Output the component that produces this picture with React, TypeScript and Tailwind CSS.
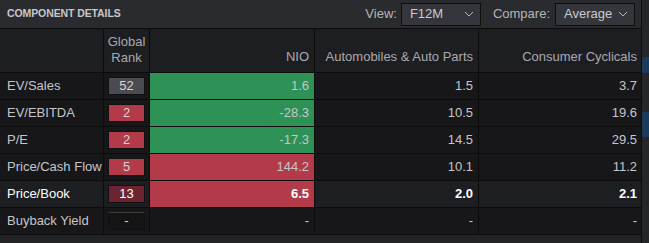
import React from 'react';

type Row = {
  label: string;
  rank: string;
  rankTone: 'gray' | 'red' | 'darkred' | 'none';
  nio: string;
  nioTone: 'green' | 'red' | 'none';
  auto: string;
  cyc: string;
  active?: boolean;
};

const rows: Row[] = [
  { label: 'EV/Sales', rank: '52', rankTone: 'gray', nio: '1.6', nioTone: 'green', auto: '1.5', cyc: '3.7' },
  { label: 'EV/EBITDA', rank: '2', rankTone: 'red', nio: '-28.3', nioTone: 'green', auto: '10.5', cyc: '19.6' },
  { label: 'P/E', rank: '2', rankTone: 'red', nio: '-17.3', nioTone: 'green', auto: '14.5', cyc: '29.5' },
  { label: 'Price/Cash Flow', rank: '5', rankTone: 'red', nio: '144.2', nioTone: 'red', auto: '10.1', cyc: '11.2' },
  { label: 'Price/Book', rank: '13', rankTone: 'darkred', nio: '6.5', nioTone: 'red', auto: '2.0', cyc: '2.1', active: true },
  { label: 'Buyback Yield', rank: '-', rankTone: 'none', nio: '-', nioTone: 'none', auto: '-', cyc: '-' },
];

const badgeClass = {
  gray: 'bg-[#4a4b51] border-[#111113]',
  red: 'bg-[#b33a48] border-[#111113]',
  darkred: 'bg-[#6c2430] border-[#111113]',
  none: 'bg-[#141415] border-[#111113] border-t-[#3a3b3e]',
};

const nioClass = {
  green: 'bg-[#2e9156]',
  red: 'bg-[#b33a48]',
  none: '',
};

function Chevron() {
  return (
    <svg width="10" height="6" viewBox="0 0 10 6" className="text-[#b4b5b9]">
      <polyline points="1,1 5,5 9,1" fill="none" stroke="currentColor" strokeWidth="1" />
    </svg>
  );
}

function Select({ value }: { value: string }) {
  return (
    <div className="flex h-[23px] w-[80px] items-center justify-between border border-[#0e0e0f] bg-[#35363b] pl-[8px] pr-[6px] text-[13px] text-[#c9cace]">
      <span>{value}</span>
      <Chevron />
    </div>
  );
}

export default function App() {
  return (
    <div
      className="flex h-[243px] w-[649px] overflow-hidden bg-[#222326] text-[13px]"
      style={{ fontFamily: '"Liberation Sans", Arial, sans-serif' }}
    >
      <div className="flex w-[642px] flex-col border-r border-[#0c0c0d]">
        {/* title bar */}
        <div className="flex h-[29px] items-center justify-between border-b border-[#0c0c0d] bg-[#2a2b2f] pl-[7px] pr-[6px]">
          <span className="text-[10.5px] font-bold tracking-[-0.1px] text-[#c6c7cb]">COMPONENT DETAILS</span>
          <div className="flex items-center">
            <span className="mr-[4px] text-[#b4b5b9]">View:</span>
            <Select value="F12M" />
            <span className="ml-[12px] mr-[5px] text-[#b4b5b9]">Compare:</span>
            <Select value="Average" />
          </div>
        </div>

        {/* header row */}
        <div className="flex h-[44px] border-b border-[#0c0c0d] bg-[#1d1e21] text-[#a9aaaf]">
          <div className="w-[104px] border-r border-[#0c0c0d]" />
          <div className="flex w-[46px] items-end justify-center border-r border-[#0c0c0d] pb-[6px] text-center leading-[16px]">
            Global
            <br />
            Rank
          </div>
          <div className="flex w-[165px] items-end justify-end border-r border-[#0c0c0d] pb-[6px] pr-[5px]">NIO</div>
          <div className="flex w-[164px] items-end justify-end border-r border-[#0c0c0d] pb-[6px] pr-[5px]">
            Automobiles &amp; Auto Parts
          </div>
          <div className="flex w-[162px] items-end justify-end pb-[6px] pr-[4px]">Consumer Cyclicals</div>
        </div>

        {rows.map((r) => {
          const text = r.active ? 'text-white' : 'text-[#c5c6ca]';
          const weight = r.active ? 'font-semibold' : '';
          return (
            <div
              key={r.label}
              className={`flex h-[27px] border-b border-[#0c0c0d] ${r.active ? 'bg-[#1d1e21]' : 'bg-[#171719]'} ${text}`}
            >
              <div className="flex w-[104px] items-center border-r border-[#0c0c0d] pl-[7px]">{r.label}</div>
              <div className="flex w-[46px] items-center justify-center border-r border-[#0c0c0d]">
                <div
                  className={`flex h-[18px] w-[37px] items-center justify-center border ${badgeClass[r.rankTone]} ${r.active ? 'text-white' : 'text-[#d4d5d8]'}`}
                >
                  {r.rank}
                </div>
              </div>
              <div
                className={`flex w-[165px] items-center justify-end border-r border-[#0c0c0d] pr-[5px] ${nioClass[r.nioTone]} ${weight}`}
              >
                {r.nio}
              </div>
              <div className={`flex w-[164px] items-center justify-end border-r border-[#0c0c0d] pr-[5px] ${weight}`}>
                {r.auto}
              </div>
              <div className={`flex w-[162px] items-center justify-end pr-[4px] ${weight}`}>{r.cyc}</div>
            </div>
          );
        })}
        <div className="flex-1 bg-[#222326]" />
      </div>

      {/* right edge strip */}
      <div className="flex w-[7px] flex-col bg-[#25262a]">
        <div className="mt-[57px] h-[16px] bg-[#1c3a5c]" />
        <div className="mt-[39px] h-[25px] bg-[#1c3a5c]" />
      </div>
    </div>
  );
}
